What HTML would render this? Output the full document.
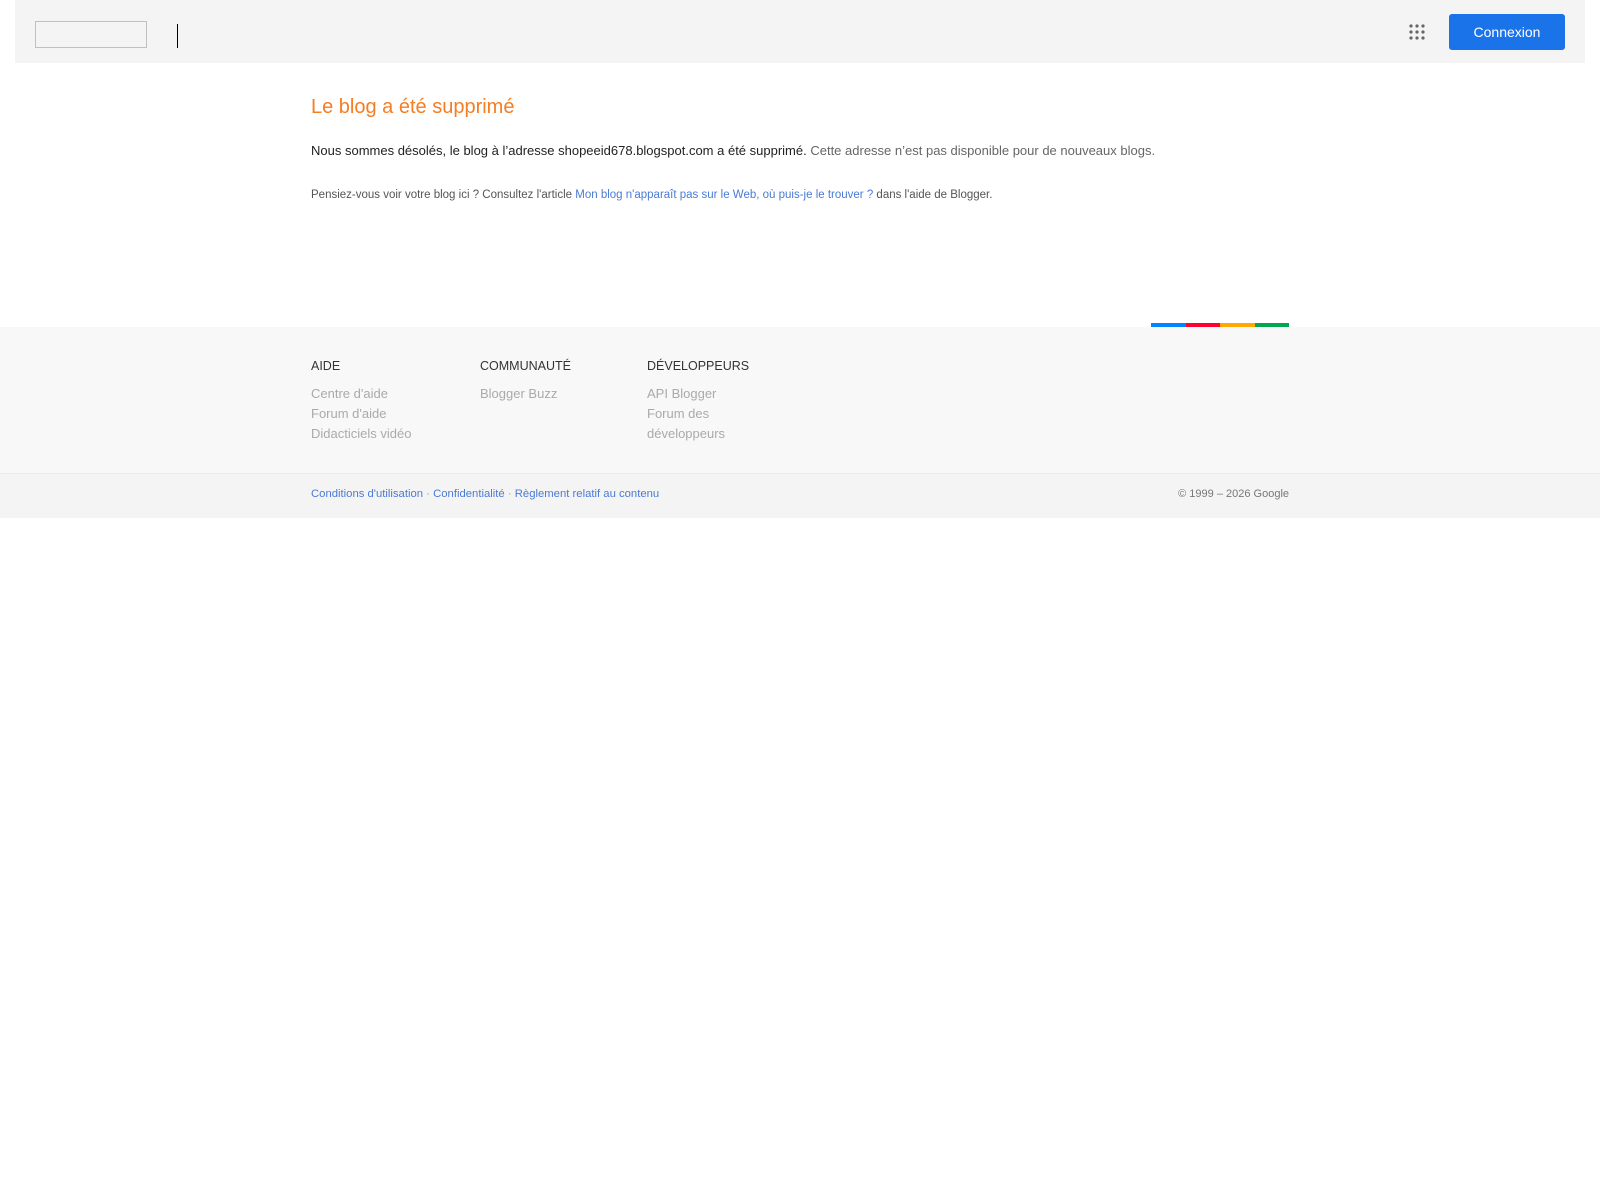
<!DOCTYPE html>
<html><head><meta charset="utf-8"><style>
*{margin:0;padding:0;box-sizing:border-box}
body{width:1600px;height:1200px;background:#fff;font-family:"Liberation Sans",sans-serif;position:relative;overflow:hidden}
.hdr{position:absolute;left:15px;top:0;width:1570px;height:63px;background:#f4f4f4}
.logo{position:absolute;left:20px;top:21px;width:112px;height:27px;border:1px solid #c0c0c0}
.bar{position:absolute;left:162px;top:24px;width:1px;height:24px;background:#000}
.grid{position:absolute;left:1394px;top:24px;width:16px;height:16px}
.btn{position:absolute;left:1434px;top:14px;width:116px;height:36px;background:#1a73e8;border-radius:3px;color:#fff;font-size:14px;text-align:center;line-height:36px}
.a{position:absolute;left:311px;white-space:nowrap}
h1{font-weight:normal;font-size:20px;color:#f57d22}
.p1{top:143px;font-size:13px;color:#222}
.p1 span{color:#666}
.p2{top:189px;font-size:11.5px;color:#555}
.p2 span,.lk{color:#4a7bd5}
.colors{position:absolute;top:323px;left:1151px;height:4px;width:138px;display:flex}
.colors div{flex:1}
.ft{position:absolute;left:0;top:327px;width:1600px;height:146px;background:#f8f8f8}
.fb{position:absolute;left:0;top:473px;width:1600px;height:45px;background:#f4f4f4;border-top:1px solid #ebebeb}
.col{position:absolute;top:356px;font-size:13px;line-height:20px;color:#aaa}
.col b{display:block;font-weight:normal;color:#333;font-size:12.5px;margin-bottom:8px}
</style></head><body>
<div class="hdr">
<div class="logo"></div><div class="bar"></div>
<svg class="grid" viewBox="0 0 16 16" fill="#666"><circle cx="2" cy="2" r="1.6"/><circle cx="8" cy="2" r="1.6"/><circle cx="14" cy="2" r="1.6"/><circle cx="2" cy="8" r="1.6"/><circle cx="8" cy="8" r="1.6"/><circle cx="14" cy="8" r="1.6"/><circle cx="2" cy="14" r="1.6"/><circle cx="8" cy="14" r="1.6"/><circle cx="14" cy="14" r="1.6"/></svg>
<div class="btn">Connexion</div>
</div>
<h1 class="a" style="top:96px">Le blog a été supprimé</h1>
<div class="a p1">Nous sommes désolés, le blog à l’adresse shopeeid678.blogspot.com a été supprimé. <span>Cette adresse n’est pas disponible pour de nouveaux blogs.</span></div>
<div class="a p2">Pensiez-vous voir votre blog ici ? Consultez l'article <span>Mon blog n'apparaît pas sur le Web, où puis-je le trouver ?</span> dans l'aide de Blogger.</div>
<div class="colors"><div style="background:#0084ff"></div><div style="background:#ff0030"></div><div style="background:#ffa800"></div><div style="background:#00a652"></div></div>
<div class="ft"></div>
<div class="col" style="left:311px"><b>AIDE</b>Centre d'aide<br>Forum d'aide<br>Didacticiels vidéo</div>
<div class="col" style="left:480px"><b>COMMUNAUTÉ</b>Blogger Buzz</div>
<div class="col" style="left:647px"><b>DÉVELOPPEURS</b>API Blogger<br>Forum des<br>développeurs</div>
<div class="fb"></div>
<div class="a" style="top:488px;font-size:11.3px;color:#999"><span class="lk">Conditions d'utilisation</span> · <span class="lk">Confidentialité</span> · <span class="lk">Règlement relatif au contenu</span></div>
<div style="position:absolute;top:488px;right:311px;font-size:11px;color:#777">© 1999 – 2026 Google</div>
</body></html>
